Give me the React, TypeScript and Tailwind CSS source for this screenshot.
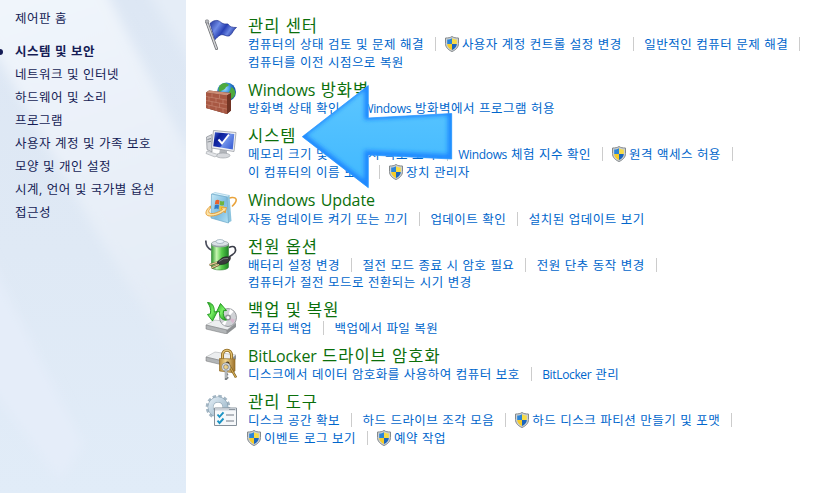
import type { ReactNode } from "react";

const koFont = "font-['Open_Sans','Noto_Sans_CJK_KR',sans-serif]";

function Mixed({ text, latin }: { text: string; latin: string }) {
  return (
    <>
      {text.split(/([A-Za-z]+)/).map((part, i) =>
        /^[A-Za-z]/.test(part) ? (
          <span key={i} className={latin}>
            {part}
          </span>
        ) : (
          part
        ),
      )}
    </>
  );
}

function Shield() {
  return (
    <svg viewBox="0 0 14 16" className="h-4 w-3.5 shrink-0">
      <path d="M7 .5C8.500 1.700 11 2 13.500 2v5.500c0 3.800-2.700 6.500-6.500 8C3.200 14 .5 11.300.5 7.500V2C3 2 5.500 1.700 7 .5Z" fill="#cdd2d4" stroke="#84898c" strokeWidth="1" />
      <path d="M7 2.200v5.800H2.200V3.500C4.200 3.500 5.600 3.100 7 2.200Z" fill="#2b84d8" />
      <path d="M7 2.200v5.800h4.800V3.500C9.800 3.500 8.400 3.100 7 2.200Z" fill="#f8dc45" />
      <path d="M2.200 8H7v6C4.200 12.800 2.300 10.800 2.200 8Z" fill="#f6cc28" />
      <path d="M11.800 8H7v6c2.800-1.200 4.700-3.200 4.800-6Z" fill="#1b65bd" />
    </svg>
  );
}

function FlagIcon() {
  return (
    <svg viewBox="0 0 32 32" className="size-8">
      <defs>
        <linearGradient id="flag" x1="0" y1="0" x2="1" y2=".5">
          <stop offset="0" stopColor="#20339a" />
          <stop offset=".35" stopColor="#6f8be6" />
          <stop offset=".6" stopColor="#2840b4" />
          <stop offset=".8" stopColor="#6a86e2" />
          <stop offset="1" stopColor="#2338a0" />
        </linearGradient>
      </defs>
      <path d="M1.800 4 11.500 30.500" stroke="#6e7074" strokeWidth="3" strokeLinecap="round" />
      <path d="M1.800 4 11.500 30.500" stroke="#d4d5d8" strokeWidth="1.400" strokeLinecap="round" />
      <circle cx="2" cy="3.500" r="1.800" fill="#b4b6ba" stroke="#77797d" strokeWidth=".6" />
      <path d="M5 5.500C8.500 2 12.500 1.500 15.500 4 19 7 21 5.500 23 6c1.500 3 4.500 3.500 8.500 3.500-3 2-4 6-6.500 8-3.500 2-6-2-9.500-.5-2.500 1-3.500 3-5.500 4.500Z" fill="url(#flag)" stroke="#1c2e8e" strokeWidth=".7" />
    </svg>
  );
}

function FirewallIcon() {
  return (
    <svg viewBox="0 0 32 32" className="size-8">
      <defs>
        <radialGradient id="globe" cx=".4" cy=".3">
          <stop offset="0" stopColor="#a9e5ff" />
          <stop offset=".6" stopColor="#3590dc" />
          <stop offset="1" stopColor="#1759ae" />
        </radialGradient>
      </defs>
      <circle cx="21.500" cy="10" r="9.500" fill="url(#globe)" />
      <path d="M17 1.800c3-1.800 5-.5 7 1-1 2-3 1.200-3.500 3.500-1.500 2-4.500 2-6 4C12.500 7 14 3.500 17 1.800ZM26 5c3 1 4.500 4 4.300 7-1 3-3 4.500-4.500 5-1-2-.5-4-2.300-6 .5-2 2.500-3 2.500-6Z" fill="#4eaa3e" />
      <path d="M1 10.500 4 8.500 26 11v17.500L22 32 1 26Z" fill="#5e2a1e" />
      <path d="m1 10.500 21 3V32L1 26Z" fill="#a85843" />
      <path d="m1 10.500 3-2L26 11l-4 2.500Z" fill="#cc8d76" />
      <path d="m1 14.500 21 3.600M1 18.500l21 4M1 22.500l21 4.700M7 11.400v4M14.500 12.500v4M4 15v4M11 16v4.400M18 17.500V22M7 19.500v4.300M14.500 21v4.600M4 23v4M11 24.700v4.200M18 26.500V31" stroke="#c98c77" strokeWidth=".6" fill="none" />
      <path d="m22 13.500 4-2.500v17.500L22 32Z" fill="#713424" />
    </svg>
  );
}

function SystemIcon() {
  return (
    <svg viewBox="0 0 32 32" className="size-8">
      <defs>
        <linearGradient id="screen" x1="0" y1="0" x2="1" y2=".6">
          <stop offset="0" stopColor="#4566d8" />
          <stop offset=".3" stopColor="#0d1f96" />
          <stop offset=".6" stopColor="#1c36b8" />
          <stop offset=".66" stopColor="#6f92ea" />
          <stop offset="1" stopColor="#4468d8" />
        </linearGradient>
      </defs>
      <path d="M1.500 9 7 6.500V24l-5-2.500Z" fill="#d4d6da" stroke="#888d94" strokeWidth=".7" />
      <path d="M2.500 11.500 6 10.500M2.500 14 6 13.300" stroke="#767c84" strokeWidth=".8" />
      <path d="m15 21 7 1.500v4H14Z" fill="#b3b6bb" />
      <ellipse cx="18" cy="27.500" rx="7" ry="2.500" fill="#d6d8dc" stroke="#969aa0" strokeWidth=".6" />
      <path d="m8.500 2.500 22.500 2-2 19L6.500 20Z" fill="#f2f3f5" stroke="#999da4" strokeWidth=".8" />
      <path d="m10 4.200 19.300 1.800-1.500 15.500L8.200 18.300Z" fill="url(#screen)" />
      <path d="m13.500 11.500 3.500 4 7-9" stroke="#fff" strokeWidth="2" fill="none" />
      <path d="m2 23 11 3.500-3 2.500-9-3.500Z" fill="#e2e4e7" stroke="#a0a4aa" strokeWidth=".6" />
    </svg>
  );
}

function UpdateIcon() {
  return (
    <svg viewBox="0 0 32 32" className="size-8">
      <defs>
        <linearGradient id="box" x1="0" y1="0" x2="1" y2="1">
          <stop offset="0" stopColor="#c8e9f7" />
          <stop offset=".55" stopColor="#7dbbdf" />
          <stop offset="1" stopColor="#b4e2f4" />
        </linearGradient>
      </defs>
      <path d="M20 8C25 5 30 4.700 31 7c.8 2-.8 4.500-4 7.500" stroke="#e9a33b" strokeWidth="1.600" fill="none" />
      <path d="M7 2 10 .5l14.500 3L22 5Z" fill="#daf1fa" stroke="#7fb7d4" strokeWidth=".5" />
      <path d="m22 5 2.500-1.500L26.500 29 23 31Z" fill="#8cc4de" />
      <path d="M6.500 2 22 5l1.500 26L6 26Z" fill="url(#box)" stroke="#6aa8c9" strokeWidth=".7" />
      <path d="M10.500 8.500c1.500-1 2.800-.8 4 0L14 12.500c-1.300-.8-2.700-.8-4.200 0Z" fill="#e8622e" />
      <path d="M15.200 8.800c1.500.8 2.700.9 4 .3l-.3 4c-1.500.6-2.800.4-4.200-.3Z" fill="#6fb43d" />
      <path d="M9.800 13.200c1.500-.8 2.800-.8 4.200 0l-.5 4c-1.300-.8-2.700-.8-4.200 0Z" fill="#2c79c6" />
      <path d="M14.600 13.500c1.500.8 2.700.9 4.200.3l-.3 4c-1.500.6-3 .4-4.400-.3Z" fill="#f5c632" />
      <path d="M5.500 14C1 17.500-.5 22 2.500 23.500c4 1.700 12-.5 17-4.500l.5 2 1.500-5.500-5.500.5 1.500 1.500C12.500 21 7 22.500 4.500 21c-1.500-1-.5-3.500 1-5Z" fill="#fbe3a6" stroke="#e39a31" strokeWidth=".9" />
    </svg>
  );
}

function PowerIcon() {
  return (
    <svg viewBox="0 0 32 32" className="size-8">
      <defs>
        <linearGradient id="battery">
          <stop offset="0" stopColor="#2f9a31" />
          <stop offset=".3" stopColor="#c6f6b0" />
          <stop offset=".6" stopColor="#56cb4a" />
          <stop offset="1" stopColor="#1e8226" />
        </linearGradient>
      </defs>
      <path d="M.8 1.500c0 4 2 8 5.500 9.500" stroke="#4a4d5c" strokeWidth="1.700" fill="none" />
      <path d="M24 8.500c4-2 7-1 6.500 3.500-.5 3.500-4 3.500-6.500 6" stroke="#3a3c48" strokeWidth="1.700" fill="none" />
      <path d="M6.500 4.500V28c0 4 17 4 17 0V4.500Z" fill="url(#battery)" stroke="#237127" strokeWidth=".5" />
      <path d="M6.500 4.500v1.300c0 3.500 17 3.500 17 0V4.500Z" fill="#9aa5a8" />
      <ellipse cx="15" cy="4.500" rx="8.500" ry="2.700" fill="#d9e0e5" stroke="#8b9799" strokeWidth=".6" />
      <ellipse cx="15" cy="2.500" rx="4" ry="2" fill="#eef4fa" stroke="#829ba8" strokeWidth=".6" />
      <path d="m11.500 23.500 5.500-4.500c3.500-1.700 6-1.200 8.500-.5 0 3-2.500 5.300-6 6.600l-5.500.7Z" fill="#3a3a3c" stroke="#19191c" strokeWidth=".6" />
      <path d="m14 22.500 4.500-2.700 4.500-.4" stroke="#84868a" strokeWidth=".8" fill="none" />
      <path d="M12 23.600 4.500 26m9.500-.3L6.500 29" stroke="#6b5a35" strokeWidth="2.200" />
      <path d="M12 23.400 4.500 25.800m9.500-.3-7.500 3.300" stroke="#e7cf9a" strokeWidth="1.200" />
    </svg>
  );
}

function Drive() {
  return (
    <>
      <path d="m1 23 9-5 21 3-9 7Z" fill="#eceeef" stroke="#a3a6a8" strokeWidth=".5" />
      <path d="m1 23 21 5v4L1 27Z" fill="#b2b5b7" stroke="#707375" strokeWidth=".5" />
      <path d="m22 28 9-7v4l-9 7Z" fill="#8f9294" />
    </>
  );
}

function BackupIcon() {
  return (
    <svg viewBox="0 0 32 32" className="size-8">
      <defs>
        <linearGradient id="arrowGreen" x1="0" y1="0" x2="1" y2="1">
          <stop offset="0" stopColor="#2aae24" />
          <stop offset=".5" stopColor="#79f065" />
          <stop offset="1" stopColor="#159116" />
        </linearGradient>
      </defs>
      <Drive />
      <ellipse cx="23" cy="15.500" rx="8.500" ry="9" fill="#d0d2d6" stroke="#85888d" strokeWidth=".8" />
      <path d="m23 15.500 2-8.500 3.500 2.500Zm0 0-3 8-3-2Z" fill="#fff" />
      <path d="m23 15.500 7 2-2 4Z" fill="#d7b9ce" />
      <circle cx="23" cy="15.500" r="3" fill="#94969b" />
      <circle cx="23" cy="15.500" r="1.500" fill="#fff" />
      <path d="M2.500.5C7 .5 9.500 4 9.300 10l3-.5L7.500 19 2.500 12.500l3-.8C6 7 5 4 2.500.5Z" fill="url(#arrowGreen)" stroke="#1c931a" strokeWidth=".9" />
      <path d="m15.500 1.500 6 7-3 .2c-.6 4 .5 7 3 9.500-5 0-7.500-3.500-7-8.700l-3 .5Z" fill="url(#arrowGreen)" stroke="#1c931a" strokeWidth=".9" />
    </svg>
  );
}

function BitLockerIcon() {
  return (
    <svg viewBox="0 0 32 32" className="size-8">
      <defs>
        <linearGradient id="lock">
          <stop offset="0" stopColor="#b98d3b" />
          <stop offset=".4" stopColor="#f0d48c" />
          <stop offset="1" stopColor="#9c702a" />
        </linearGradient>
      </defs>
      <g transform="translate(0 -14)">
        <Drive />
      </g>
      <path d="M17.500 12V7.500c0-7 9-7 9 0V12" stroke="#8c671f" strokeWidth="3" fill="none" />
      <path d="M17.500 12V7.500c0-7 9-7 9 0V12" stroke="#e3c16f" strokeWidth="1.400" fill="none" />
      <path d="m14.500 10.500 15.500.5v12L27 24.500 14.500 23Z" fill="url(#lock)" stroke="#946d26" strokeWidth=".7" />
      <circle cx="22.500" cy="15.500" r="2" fill="#4b3819" />
      <path d="m24 17 7 12.500" stroke="#785a22" strokeWidth="2.400" />
      <path d="m24 17 7 12.500" stroke="#d6ae52" strokeWidth="1.200" />
      <circle cx="21" cy="19" r="3.300" fill="none" stroke="#85898d" strokeWidth="2.400" />
      <circle cx="21" cy="19" r="3.300" fill="none" stroke="#e2e4e5" strokeWidth="1.100" />
      <path d="M21 22v9l2-2m-2-2 2-1" stroke="#7c8185" strokeWidth="2.400" fill="none" />
      <path d="M21 22v8" stroke="#e7eaeb" strokeWidth="1" />
    </svg>
  );
}

function ToolsIcon() {
  return (
    <svg viewBox="0 0 32 32" className="size-8">
      <defs>
        <linearGradient id="gear" x1="0" y1="0" x2="1" y2="1">
          <stop offset="0" stopColor="#dce8f1" />
          <stop offset="1" stopColor="#9bb6c8" />
        </linearGradient>
      </defs>
      <circle cx="13" cy="13" r="10.800" fill="none" stroke="#a3b6c4" strokeWidth="3" strokeDasharray="3.400 2.255" />
      <circle cx="13" cy="13" r="7.500" fill="none" stroke="#8098a8" strokeWidth="5.800" />
      <circle cx="13" cy="13" r="7.500" fill="none" stroke="url(#gear)" strokeWidth="4.800" />
      <path d="M9.500 14h22v17.500h-22Z" fill="#f6f8fa" stroke="#85909a" />
      <path d="M10 14.500h21v2H10Z" fill="#ccd3da" />
      <path d="M24.500 15.500h1m1 0h1m1 0h1" stroke="#4c5965" />
      <path d="M21 21h8M21 27h8" stroke="#737b86" strokeWidth="1.200" />
      <path d="m12.500 20.500 2 2.300 4-4.500m-6 8.400 2 2.300 4-4.500" stroke="#1b93c4" strokeWidth="1.900" fill="none" />
    </svg>
  );
}

type Task = { text: string; shield?: boolean };
type Line = { tasks: Task[]; trailing?: boolean };
type Category = { title: string; icon: ReactNode; height: string; offset?: string; lines: Line[] };

const categories: Category[] = [
  {
    title: "관리 센터",
    icon: <FlagIcon />,
    height: "h-16",
    lines: [
      {
        tasks: [{ text: "컴퓨터의 상태 검토 및 문제 해결" }, { text: "사용자 계정 컨트롤 설정 변경", shield: true }, { text: "일반적인 컴퓨터 문제 해결" }],
        trailing: true,
      },
      { tasks: [{ text: "컴퓨터를 이전 시점으로 복원" }] },
    ],
  },
  {
    title: "Windows 방화벽",
    icon: <FirewallIcon />,
    height: "h-[46px]",
    lines: [{ tasks: [{ text: "방화벽 상태 확인" }, { text: "Windows 방화벽에서 프로그램 허용" }] }],
  },
  {
    title: "시스템",
    icon: <SystemIcon />,
    height: "h-16",
    lines: [
      {
        tasks: [{ text: "메모리 크기 및 프로세서 속도 보기" }, { text: "Windows 체험 지수 확인" }, { text: "원격 액세스 허용", shield: true }],
        trailing: true,
      },
      { tasks: [{ text: "이 컴퓨터의 이름 보기" }, { text: "장치 관리자", shield: true }] },
    ],
  },
  {
    title: "Windows Update",
    icon: <UpdateIcon />,
    height: "h-[47px]",
    offset: "mt-px",
    lines: [{ tasks: [{ text: "자동 업데이트 켜기 또는 끄기" }, { text: "업데이트 확인" }, { text: "설치된 업데이트 보기" }] }],
  },
  {
    title: "전원 옵션",
    icon: <PowerIcon />,
    height: "h-[63px]",
    offset: "-space-y-px",
    lines: [
      {
        tasks: [{ text: "배터리 설정 변경" }, { text: "절전 모드 종료 시 암호 필요" }, { text: "전원 단추 동작 변경" }],
        trailing: true,
      },
      { tasks: [{ text: "컴퓨터가 절전 모드로 전환되는 시기 변경" }] },
    ],
  },
  {
    title: "백업 및 복원",
    icon: <BackupIcon />,
    height: "h-[46px]",
    lines: [{ tasks: [{ text: "컴퓨터 백업" }, { text: "백업에서 파일 복원" }] }],
  },
  {
    title: "BitLocker 드라이브 암호화",
    icon: <BitLockerIcon />,
    height: "h-[46px]",
    lines: [{ tasks: [{ text: "디스크에서 데이터 암호화를 사용하여 컴퓨터 보호" }, { text: "BitLocker 관리" }] }],
  },
  {
    title: "관리 도구",
    icon: <ToolsIcon />,
    height: "h-16",
    lines: [
      {
        tasks: [{ text: "디스크 공간 확보" }, { text: "하드 드라이브 조각 모음" }, { text: "하드 디스크 파티션 만들기 및 포맷", shield: true }],
        trailing: true,
      },
      { tasks: [{ text: "이벤트 로그 보기", shield: true }, { text: "예약 작업", shield: true }] },
    ],
  },
];

const navItems = ["시스템 및 보안", "네트워크 및 인터넷", "하드웨어 및 소리", "프로그램", "사용자 계정 및 가족 보호", "모양 및 개인 설정", "시계, 언어 및 국가별 옵션", "접근성"];

function Sidebar() {
  return (
    <aside className="relative h-full w-[186px] shrink-0 overflow-hidden bg-linear-to-b from-[#dde7f4] via-[#dfe9f5] to-[#e1ecf8]">
      <svg viewBox="0 0 186 493" className="absolute inset-0 h-full w-full">
        <defs>
          <filter id="soft" x="-30%" y="-30%" width="160%" height="160%">
            <feGaussianBlur stdDeviation="6" />
          </filter>
          <linearGradient id="beam" gradientUnits="userSpaceOnUse" x1="30" y1="0" x2="150" y2="340">
            <stop offset="0" stopColor="#f0f5fb" />
            <stop offset=".6" stopColor="#e8eff8" />
            <stop offset="1" stopColor="#e3ebf6" />
          </linearGradient>
        </defs>
        <g filter="url(#soft)">
          <path d="M-20-20h120l66 130 60 110v220L95 230 0 60-20 30Z" fill="url(#beam)" />
          <path d="M140-20 220 110V-20Z" fill="#e5edf7" />
          <path d="m-15 250 98 195-23 35L-15 380Z" fill="#e5edf9" />
        </g>
      </svg>
      <nav className="relative pt-[7px] pl-[15px] text-[12.5px] leading-[23px] tracking-[0.48px] whitespace-nowrap text-[#151c55] [word-spacing:0.3px]">
        <div className="mb-2.5">제어판 홈</div>
        {navItems.map((item, i) => (
          <div key={item} className={i === 0 ? "relative font-bold" : ""}>
            {i === 0 && <span className="absolute top-[9px] -left-[18px] size-[6px] rounded-full bg-[#151c55]" />}
            {item}
          </div>
        ))}
      </nav>
    </aside>
  );
}

function Divider() {
  return <span className="h-3.5 w-px shrink-0 bg-[#cccccc]" />;
}

function TaskLine({ tasks, trailing }: Line) {
  return (
    <div className="flex h-[18px] items-center whitespace-nowrap">
      {tasks.map((task, i) => (
        <div key={task.text} className="flex items-center">
          {i > 0 && <Divider />}
          <a className={`flex items-center gap-[3px] ${i > 0 ? (task.shield ? "ml-[9px]" : "ml-[10.5px]") : task.shield ? "-ml-px" : ""} mr-[11px]`}>
            {task.shield && <Shield />}
            <span className="pt-px">
              <Mixed text={task.text} latin="text-[12px] tracking-[-0.35px]" />
            </span>
          </a>
        </div>
      ))}
      {trailing && <Divider />}
    </div>
  );
}

const calloutShape = "M4.300 55.700 70.300 4.500V37L153.700 32.500V78L70.300 74V106.700Z";

function CalloutArrow() {
  return (
    <svg viewBox="0 0 160 112" className="absolute top-[81px] left-[298px] h-[112px] w-[160px]">
      <defs>
        <linearGradient id="callout" x1="0" y1="0" x2="0" y2="1">
          <stop offset="0" stopColor="#5cc6ff" />
          <stop offset="1" stopColor="#40b8ff" />
        </linearGradient>
        <clipPath id="calloutClip">
          <path d={calloutShape} />
        </clipPath>
        <filter id="glow" x="-10%" y="-10%" width="120%" height="120%">
          <feGaussianBlur stdDeviation="2" />
        </filter>
      </defs>
      <path d={calloutShape} fill="url(#callout)" />
      <g clipPath="url(#calloutClip)">
        <path d={calloutShape} transform="translate(-1 -1.500)" fill="none" stroke="#1f86ff" strokeWidth="6" filter="url(#glow)" />
      </g>
      <path d={calloutShape} fill="none" stroke="#2f97ff" strokeWidth=".7" />
    </svg>
  );
}

export default function App() {
  return (
    <div className={`relative flex h-[493px] w-[815px] overflow-hidden bg-white ${koFont}`}>
      <Sidebar />
      <main className="pt-[17px] pl-[19px]">
        {categories.map((c) => (
          <section key={c.title} className={`flex gap-[11px] ${c.height}`}>
            <div className="mt-px size-8 shrink-0">{c.icon}</div>
            <div>
              <h2 className="h-[18px] text-[16.5px] leading-[18px] tracking-[1px] whitespace-nowrap text-[#0b6f0b]">
                <Mixed text={c.title} latin="text-[16px] tracking-[-0.1px]" />
              </h2>
              <div className={`text-[12.5px] leading-[17px] tracking-[0.48px] text-[#0066cc] [word-spacing:0.3px] ${c.offset ?? ""}`}>
                {c.lines.map((line) => (
                  <TaskLine key={line.tasks[0].text} tasks={line.tasks} trailing={line.trailing} />
                ))}
              </div>
            </div>
          </section>
        ))}
      </main>
      <CalloutArrow />
    </div>
  );
}
